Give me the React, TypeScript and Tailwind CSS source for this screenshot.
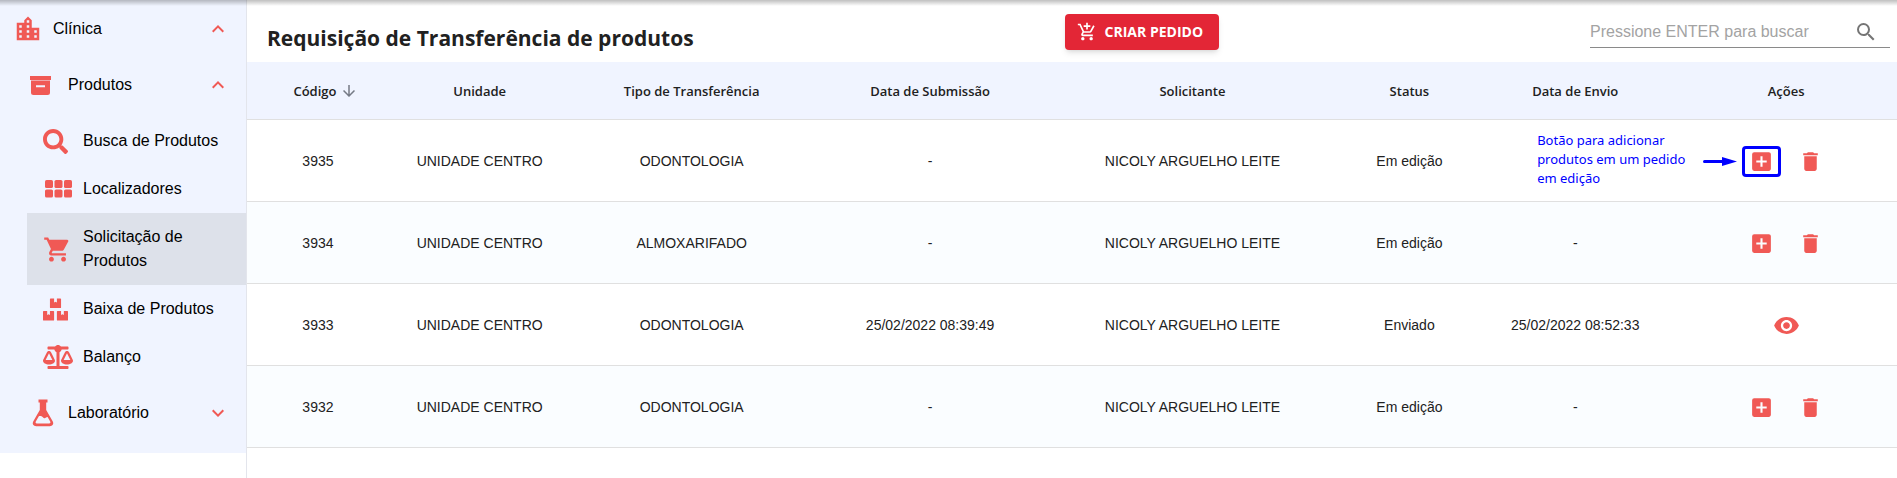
import React from "react";
import { FaBalanceScale, FaBoxes, FaSearch } from "react-icons/fa";
import {
  MdAddBox,
  MdArrowDownward,
  MdDelete,
  MdExpandLess,
  MdExpandMore,
  MdLocationCity,
  MdOutlineAddShoppingCart,
  MdSearch,
  MdShoppingCart,
  MdVisibility,
} from "react-icons/md";

interface Pedido {
  codigo: string;
  unidade: string;
  tipo: string;
  submissao: string;
  solicitante: string;
  status: string;
  envio: string;
}

const pedidos: Pedido[] = [
  { codigo: "3935", unidade: "UNIDADE CENTRO", tipo: "ODONTOLOGIA", submissao: "-", solicitante: "NICOLY ARGUELHO LEITE", status: "Em edição", envio: "" },
  { codigo: "3934", unidade: "UNIDADE CENTRO", tipo: "ALMOXARIFADO", submissao: "-", solicitante: "NICOLY ARGUELHO LEITE", status: "Em edição", envio: "-" },
  { codigo: "3933", unidade: "UNIDADE CENTRO", tipo: "ODONTOLOGIA", submissao: "25/02/2022 08:39:49", solicitante: "NICOLY ARGUELHO LEITE", status: "Enviado", envio: "25/02/2022 08:52:33" },
  { codigo: "3932", unidade: "UNIDADE CENTRO", tipo: "ODONTOLOGIA", submissao: "-", solicitante: "NICOLY ARGUELHO LEITE", status: "Em edição", envio: "-" },
];

function ArchiveIcon() {
  return (
    <svg width="21" height="19" viewBox="0 0 21 19" fill="currentColor" fillRule="evenodd" aria-hidden="true">
      <path d="M0 0h21v4H0z" />
      <path d="M1 4.600h19v11.900a2.500 2.500 0 0 1-2.500 2.500h-14a2.500 2.500 0 0 1-2.500-2.500zM6 9.300v2h9v-2z" />
    </svg>
  );
}

function LocatorIcon() {
  return (
    <svg width="27" height="18" viewBox="0 0 27 18" fill="currentColor" aria-hidden="true">
      {[0, 9.5, 19].map((x) =>
        [0, 9.5].map((y) => <rect key={`${x}-${y}`} x={x} y={y} width="8" height="8" rx="1.6" />)
      )}
    </svg>
  );
}

function FlaskIcon() {
  return (
    <svg width="22" height="28" viewBox="0 0 22 28" fill="currentColor" fillRule="evenodd" aria-hidden="true">
      <path d="M6.500 0.500h9v3h-1.300v7.500l6.600 11.500c1.200 2.400-.2 4.700-3 4.700H4.200c-2.800 0-4.200-2.300-3-4.700L7.800 11V3.500H6.500zM7 17l-3.200 5.600c-.6 1.200 0 1.800 1 1.800h12.400c1 0 1.600-.6 1-1.800l-2.600-4.600c-1.600 0-1.800 1.400-3.300 1.200-1.500-.2-1.800-2-3.300-2.200z" />
    </svg>
  );
}

interface MenuItemProps {
  icon: React.ReactNode;
  label: string;
  active?: boolean;
}

function MenuItem({ icon, label, active }: MenuItemProps) {
  return (
    <a
      href="#"
      className={`ml-[27px] flex items-center px-4 py-3 ${active ? "bg-[#dde1ea]" : ""}`}
    >
      <span className="flex h-6 w-10 shrink-0 items-center text-[#f05955]">{icon}</span>
      <span className="leading-6">{label}</span>
    </a>
  );
}

interface MenuGroupProps {
  icon: React.ReactNode;
  label: string;
  open?: boolean;
  nested?: boolean;
}

function MenuGroup({ icon, label, open, nested }: MenuGroupProps) {
  return (
    <button
      type="button"
      aria-expanded={!!open}
      className={`flex h-14 w-full items-center pr-4 text-left ${nested ? "pl-[30px]" : "pl-[13px]"}`}
    >
      <span className={`flex shrink-0 text-[#f05955] ${nested ? "w-[38px]" : "w-10"}`}>{icon}</span>
      <span className="grow leading-6">{label}</span>
      {open ? (
        <MdExpandLess size={24} className="text-[#f05955]" />
      ) : (
        <MdExpandMore size={24} className="text-[#f05955]" />
      )}
    </button>
  );
}

function Sidebar() {
  return (
    <aside className="w-[247px] shrink-0 border-r border-[#e3e5ec] text-base text-black">
      <nav className="bg-[#f0f4ff] pt-px pb-3">
        <MenuGroup icon={<MdLocationCity size={30} />} label="Clínica" open />
        <MenuGroup nested icon={<ArchiveIcon />} label="Produtos" open />
        <div className="py-1">
          <MenuItem icon={<FaSearch size={25} />} label="Busca de Produtos" />
          <MenuItem icon={<span className="pl-0.5"><LocatorIcon /></span>} label="Localizadores" />
          <MenuItem icon={<MdShoppingCart size={29} />} label="Solicitação de Produtos" active />
          <MenuItem icon={<FaBoxes size={25} />} label="Baixa de Produtos" />
          <MenuItem icon={<FaBalanceScale size={30} />} label="Balanço" />
        </div>
        <MenuGroup nested icon={<span className="pl-0.5"><FlaskIcon /></span>} label="Laboratório" />
      </nav>
    </aside>
  );
}

/** Blue callout pointing at the add button of the first row. */
function Callout() {
  return (
    <div className="pointer-events-none absolute top-1/2 right-full flex -translate-y-1/2 items-center text-left">
      <p className="w-[166px] pb-1 font-['Noto_Sans',sans-serif] text-[13px] leading-[19px] text-[#0000ff]">
        Botão para adicionar produtos em um pedido em edição
      </p>
      <svg width="34" height="10" viewBox="0 0 34 10" className="shrink-0" fill="#0000ff" aria-hidden="true">
        <rect x="0" y="3.500" width="22" height="3" rx="1.500" />
        <path d="M19 0.500 34 5 19 9.500z" />
      </svg>
    </div>
  );
}

function RowActions({ pedido, highlight }: { pedido: Pedido; highlight: boolean }) {
  if (pedido.status === "Enviado") {
    return (
      <button type="button" aria-label={`Visualizar pedido ${pedido.codigo}`} className="p-3">
        <MdVisibility size={27} />
      </button>
    );
  }
  return (
    <>
      <span className="relative">
        <button type="button" aria-label={`Adicionar produtos ao pedido ${pedido.codigo}`} className="block p-3">
          <MdAddBox size={25} />
        </button>
        {highlight && (
          <>
            <span className="pointer-events-none absolute inset-x-[5px] inset-y-[9px] rounded-sm border-3 border-[#0000ff]" />
            <Callout />
          </>
        )}
      </span>
      <button type="button" aria-label={`Excluir pedido ${pedido.codigo}`} className="p-3">
        <MdDelete size={25} />
      </button>
    </>
  );
}

export default function App() {
  return (
    <div className="relative flex min-h-screen bg-white font-['Liberation_Sans',Arial,sans-serif] text-[#212121]">
      {/* Shadow cast by the app bar above */}
      <div className="pointer-events-none absolute inset-x-0 top-0 h-1.5 bg-linear-to-b from-black/25 to-transparent" />
      <Sidebar />

      <main className="min-w-0 grow">
        <header className="flex h-[62px] items-center justify-between pt-0.5 pr-[7px] pl-5">
          <h1 className="pt-3 font-['Open_Sans','Noto_Sans',sans-serif] text-[21px] leading-8 font-bold">
            Requisição de Transferência de produtos
          </h1>
          <button
            type="button"
            className="flex h-9 items-center gap-2 rounded bg-[#e32636] pr-4 pl-3 font-['Open_Sans','Noto_Sans',sans-serif] text-sm font-bold text-white shadow-md"
          >
            <MdOutlineAddShoppingCart size={20} />
            CRIAR PEDIDO
          </button>
          <div className="flex h-8 w-[300px] items-center border-b border-[#8a8a8a] pr-3">
            <input
              type="text"
              aria-label="Buscar pedidos"
              placeholder="Pressione ENTER para buscar"
              className="min-w-0 grow text-base outline-none placeholder:text-[#a3a3a3]"
            />
            <button type="button" aria-label="Buscar" className="text-[#757575]">
              <MdSearch size={24} />
            </button>
          </div>
        </header>

        <table className="w-full table-fixed border-collapse text-center text-sm">
          <thead className="bg-[#f0f4ff] font-['Open_Sans','Noto_Sans',sans-serif] text-[13px]">
            <tr className="h-[57px] border-b border-[#e0e0e0] *:pt-0.5 *:font-semibold">
              <th className="w-[8.6%]">
                <button type="button" className="inline-flex items-center gap-1 pl-4">
                  Código <MdArrowDownward size={18} className="text-[#757a85]" />
                </button>
              </th>
              <th className="w-[11%]">Unidade</th>
              <th className="w-[14.7%]">Tipo de Transferência</th>
              <th className="w-[14.2%]">Data de Submissão</th>
              <th className="w-[17.6%]">Solicitante</th>
              <th className="w-[8.7%]">Status</th>
              <th className="w-[11.4%]">Data de Envio</th>
              <th className="pl-1.5">Ações</th>
            </tr>
          </thead>
          <tbody>
            {pedidos.map((pedido, i) => (
              <tr key={pedido.codigo} className="h-[82px] border-b border-[#e0e0e0] *:pt-0.5 even:bg-[#fafdff]">
                <td>{pedido.codigo}</td>
                <td>{pedido.unidade}</td>
                <td>{pedido.tipo}</td>
                <td>{pedido.submissao}</td>
                <td>{pedido.solicitante}</td>
                <td>{pedido.status}</td>
                <td>{pedido.envio}</td>
                <td className="pl-1.5">
                  <div className="flex items-center justify-center text-[#f05955]">
                    <RowActions pedido={pedido} highlight={i === 0} />
                  </div>
                </td>
              </tr>
            ))}
          </tbody>
        </table>
      </main>
    </div>
  );
}
